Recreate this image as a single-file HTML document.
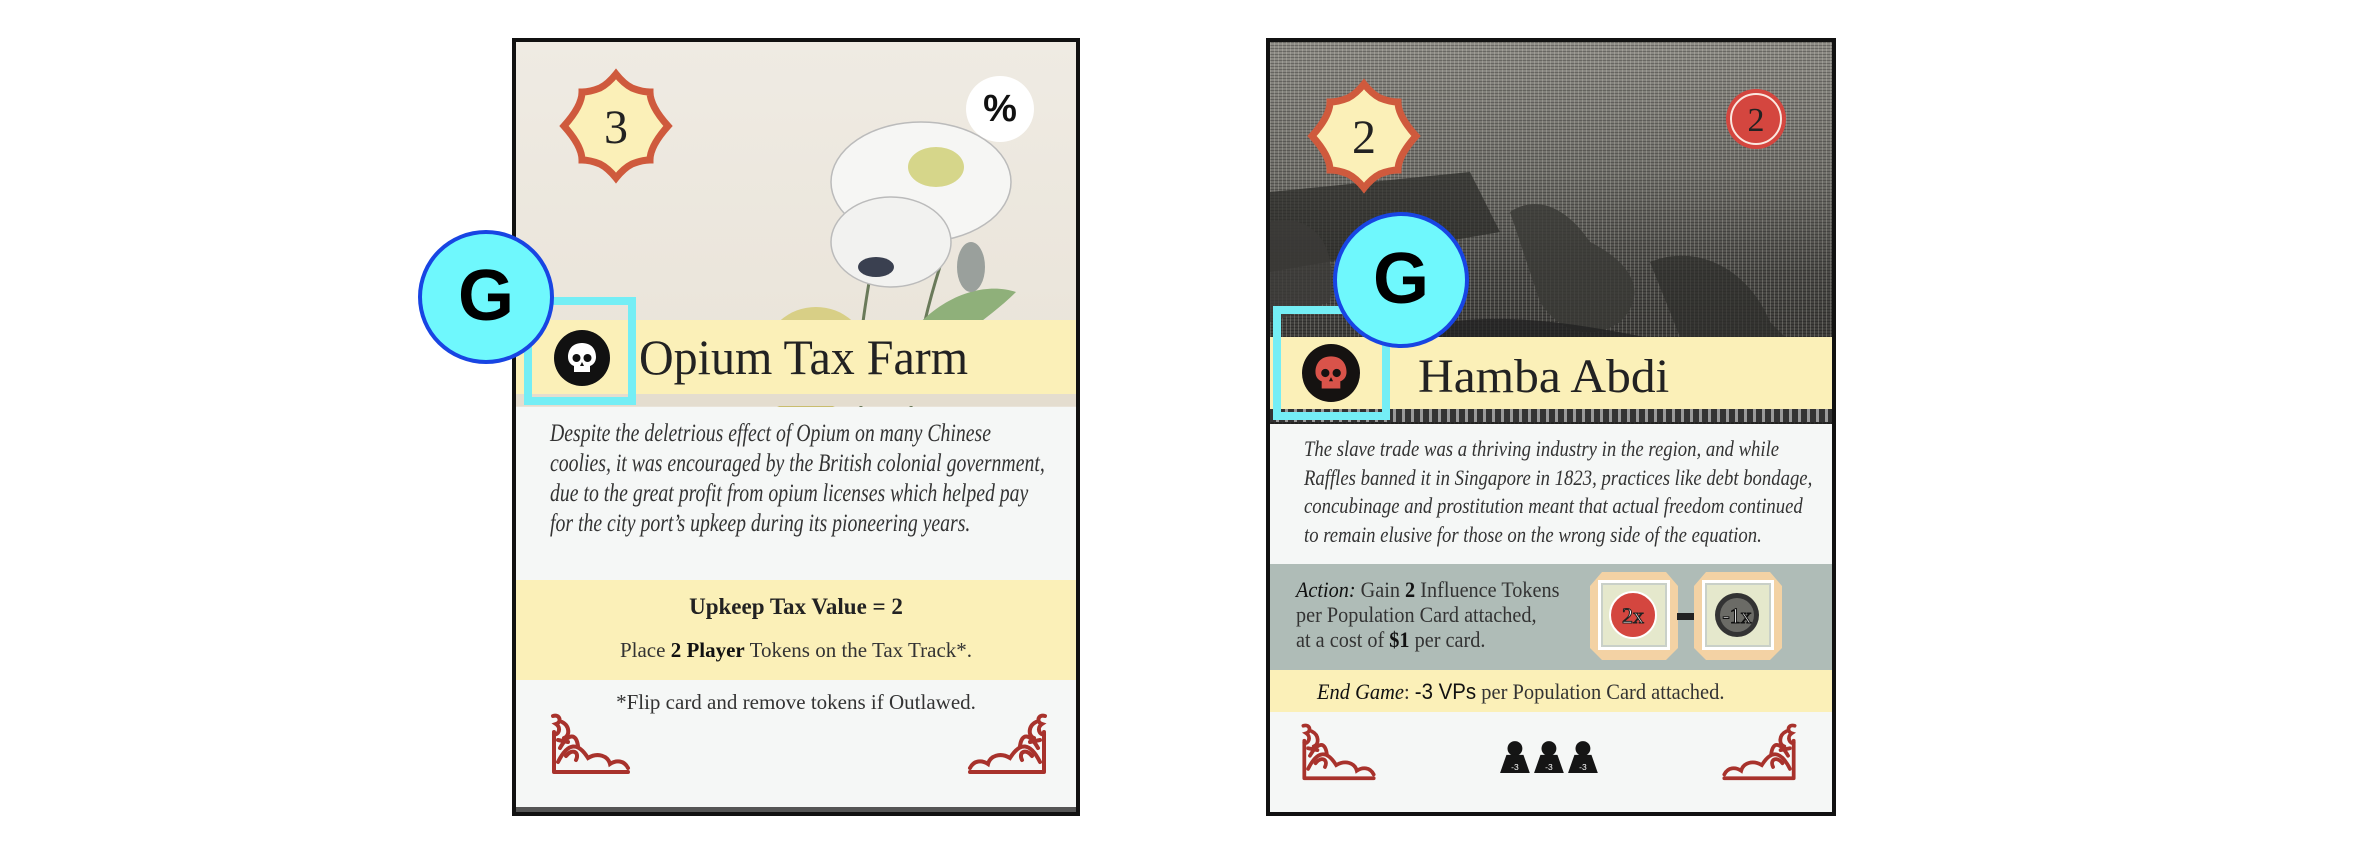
<!DOCTYPE html>
<html><head><meta charset="utf-8">
<style>
*{margin:0;padding:0;box-sizing:border-box}
body{width:2378px;height:844px;background:#fff;position:relative;overflow:hidden;font-family:"Liberation Serif",serif;color:#222}
.abs{position:absolute}
.card{position:absolute;border:4px solid #111;overflow:hidden;background:#f5f7f6}
.band{position:absolute;left:0;right:0;background:#fbf0b8}
.line{position:absolute;white-space:nowrap;transform-origin:0 0}
.g{position:absolute;border-radius:50%;background:#6ff8fd;border:4px solid #1845e3;font-family:"Liberation Sans",sans-serif;font-weight:bold;color:#000;text-align:center}
.sq{position:absolute;border:8px solid #74eef5}
</style></head><body>

<!-- CARD 1 -->
<div class="card" style="left:512px;top:38px;width:568px;height:778px">
  <div class="abs" style="left:0;top:0;width:560px;height:365px;background:linear-gradient(#efebe3,#e9e3d8)"></div>
  <svg class="abs" style="left:0;top:0" width="560" height="365">
    <ellipse cx="300" cy="310" rx="50" ry="45" fill="#d8cf86"/>
    <ellipse cx="290" cy="330" rx="55" ry="40" fill="#c9bd6e"/>
    <path d="M360 200 C350 260 340 300 345 365" stroke="#6a7a5a" stroke-width="3" fill="none"/>
    <path d="M440 180 C420 230 400 300 395 365" stroke="#6a7a5a" stroke-width="3" fill="none"/>
    <path d="M380 310 C420 250 470 240 500 250 C470 280 430 300 400 340Z" fill="#8fb07a"/>
    <ellipse cx="405" cy="140" rx="90" ry="60" fill="#f6f6f4" stroke="#bbb" stroke-width="1.5"/>
    <ellipse cx="375" cy="200" rx="60" ry="45" fill="#f2f2f0" stroke="#bbb" stroke-width="1.5"/>
    <ellipse cx="420" cy="125" rx="28" ry="20" fill="#d6d68a"/>
    <ellipse cx="360" cy="225" rx="18" ry="10" fill="#3a4050"/>
    <ellipse cx="455" cy="225" rx="14" ry="25" fill="#9aa09c"/>
  </svg>
  <svg class="abs" style="left:42px;top:26px" width="116" height="116" viewBox="-58 -58 116 116">
    <path d="M0 -52 Q8 -42 16 -38 Q26 -34 34 -34 Q34 -20 52 0 Q34 20 34 34 Q26 34 16 38 Q8 42 0 52 Q-8 42 -16 38 Q-26 34 -34 34 Q-34 20 -52 0 Q-34 -20 -34 -34 Q-26 -34 -16 -38 Q-8 -42 0 -52Z" fill="#fbf0b8" stroke="#cf5a3d" stroke-width="7"/>
    <text x="0" y="17" text-anchor="middle" font-family="Liberation Serif" font-size="48" fill="#222">3</text>
  </svg>
  <div class="abs" style="left:450px;top:34px;width:68px;height:66px;border-radius:50%;background:#fff;text-align:center;font:bold 38px/66px 'Liberation Sans',sans-serif;color:#111">%</div>
  <div class="band" style="top:278px;height:74px"></div>
  <div class="abs" style="left:0;top:352px;width:560px;height:12px;background:#e4ddcf"></div>
  <svg class="abs" style="left:38px;top:288px" width="56" height="56" viewBox="0 0 56 56">
    <circle cx="28" cy="28" r="28" fill="#111"/>
    <path d="M28 13 C18 13 14 20 14 27 C14 32 17 35 20 36 L20 42 L36 42 L36 36 C39 35 42 32 42 27 C42 20 38 13 28 13Z" fill="#fff"/>
    <circle cx="22.5" cy="28" r="4" fill="#111"/><circle cx="33.5" cy="28" r="4" fill="#111"/>
    <path d="M28 32 L26 36 L30 36Z" fill="#111"/>
  </svg>
  <div class="line" style="left:123px;top:286px;font-size:50px;transform:scaleX(0.96)">Opium Tax Farm</div>
  <div class="line" style="left:34px;top:377px;font-size:25px;font-style:italic;line-height:30px;transform:scaleX(0.79);color:#333">Despite the deletrious effect of Opium on many Chinese<br>coolies, it was encouraged by the British colonial government,<br>due to the great profit from opium licenses which helped pay<br>for the city port’s upkeep during its pioneering years.</div>
  <div class="band" style="top:538px;height:100px"></div>
  <div class="abs" style="left:0;width:560px;top:552px;text-align:center;font-weight:bold;font-size:23px;color:#222">Upkeep Tax Value = 2</div>
  <div class="abs" style="left:0;width:560px;top:596px;text-align:center;font-size:21px;color:#333">Place <b style="color:#111">2 Player</b> Tokens on the Tax Track*.</div>
  <div class="abs" style="left:0;width:560px;top:648px;text-align:center;font-size:21px;color:#333">*Flip card and remove tokens if Outlawed.</div>
  <svg class="abs" style="left:32px;top:670px" width="86" height="64" viewBox="0 0 86 64"><g fill="none" stroke="#a8322c" stroke-width="4" stroke-linecap="round">
    <path d="M5 4 C12 2 14 10 8 12 C14 16 10 24 6 22"/><path d="M6 60 L6 20 M6 60 L80 60"/>
    <path d="M10 50 C20 30 30 30 40 46 C50 40 60 44 62 52 C68 48 76 48 80 56"/>
    <path d="M12 36 C20 22 28 20 30 34 M18 44 C24 36 32 40 28 48"/><path d="M10 28 L20 30 M14 10 C22 14 22 24 16 26"/>
  </g></svg>
  <svg class="abs" style="left:448px;top:670px;transform:scaleX(-1)" width="86" height="64" viewBox="0 0 86 64"><g fill="none" stroke="#a8322c" stroke-width="4" stroke-linecap="round">
    <path d="M5 4 C12 2 14 10 8 12 C14 16 10 24 6 22"/><path d="M6 60 L6 20 M6 60 L80 60"/>
    <path d="M10 50 C20 30 30 30 40 46 C50 40 60 44 62 52 C68 48 76 48 80 56"/>
    <path d="M12 36 C20 22 28 20 30 34 M18 44 C24 36 32 40 28 48"/><path d="M10 28 L20 30 M14 10 C22 14 22 24 16 26"/>
  </g></svg>
  <div class="abs" style="left:0;top:765px;width:560px;height:5px;background:#555"></div>
</div>
<div class="sq" style="left:524px;top:297px;width:112px;height:108px"></div>
<div class="g" style="left:418px;top:230px;width:136px;height:134px;font-size:72px;line-height:124px">G</div>

<!-- CARD 2 -->
<div class="card" style="left:1266px;top:38px;width:570px;height:778px">
  <div class="abs" style="left:0;top:0;width:562px;height:382px;background:
    repeating-linear-gradient(90deg,rgba(255,255,240,.18) 0 1px,transparent 1px 4px),
    repeating-linear-gradient(0deg,rgba(0,0,0,.25) 0 1px,transparent 1px 3px),
    linear-gradient(#8e8c86 0%,#6f6e69 35%,#4a4946 60%,#2d2c2a 100%)"></div>
  <svg class="abs" style="left:0;top:0" width="562" height="382">
    <path d="M0 150 L200 130 L230 190 L0 230Z" fill="#2a2927" opacity=".7"/>
    <path d="M240 170 C270 150 300 170 320 200 C360 220 380 250 350 280 C320 300 290 290 270 260Z" fill="#3a3936" opacity=".8"/>
    <path d="M380 220 C430 200 480 230 500 280 L540 320 L420 320Z" fill="#2e2d2b" opacity=".7"/>
    <path d="M100 300 C200 260 300 280 400 300 L562 330 L562 382 L0 382 L0 320Z" fill="#222" opacity=".75"/>
    <path d="M0 180 C40 170 70 200 60 260 L0 280Z" fill="#3c3b38" opacity=".8"/>
  </svg>
  <svg class="abs" style="left:36px;top:36px" width="116" height="116" viewBox="-58 -58 116 116">
    <path d="M0 -52 Q8 -42 16 -38 Q26 -34 34 -34 Q34 -20 52 0 Q34 20 34 34 Q26 34 16 38 Q8 42 0 52 Q-8 42 -16 38 Q-26 34 -34 34 Q-34 20 -52 0 Q-34 -20 -34 -34 Q-26 -34 -16 -38 Q-8 -42 0 -52Z" fill="#fbf0b8" stroke="#cf5a3d" stroke-width="7"/>
    <text x="0" y="17" text-anchor="middle" font-family="Liberation Serif" font-size="48" fill="#222">2</text>
  </svg>
  <svg class="abs" style="left:454px;top:45px" width="64" height="64" viewBox="0 0 64 64">
    <circle cx="32" cy="32" r="30" fill="#d4463f"/><circle cx="32" cy="32" r="25" fill="none" stroke="#fbe8e0" stroke-width="2"/>
    <text x="32" y="44" text-anchor="middle" font-family="Liberation Serif" font-size="34" fill="#222">2</text>
  </svg>
  <div class="band" style="top:295px;height:72px"></div>
  <div class="abs" style="left:0;top:367px;width:562px;height:13px;background:repeating-linear-gradient(90deg,#333 0 6px,#999 6px 9px)"></div>
  <svg class="abs" style="left:32px;top:302px" width="58" height="58" viewBox="0 0 56 56">
    <circle cx="28" cy="28" r="28" fill="#151211"/>
    <path d="M28 12 C18 12 13 19 13 27 C13 32 16 35 19 36 L19 43 L37 43 L37 36 C40 35 43 32 43 27 C43 19 38 12 28 12Z" fill="#d9534a"/>
    <circle cx="22.5" cy="28" r="4" fill="#151211"/><circle cx="33.5" cy="28" r="4" fill="#151211"/>
    <path d="M28 32 L26 36 L30 36Z" fill="#151211"/>
  </svg>
  <div class="line" style="left:148px;top:307px;font-size:48px;transform:scaleX(1.03)">Hamba Abdi</div>
  <div class="line" style="left:34px;top:393px;font-size:22px;font-style:italic;line-height:28.5px;transform:scaleX(0.85);color:#333">The slave trade was a thriving industry in the region, and while<br>Raffles banned it in Singapore in 1823, practices like debt bondage,<br>concubinage and prostitution meant that actual freedom continued<br>to remain elusive for those on the wrong side of the equation.</div>
  <div class="abs" style="left:0;top:522px;width:562px;height:106px;background:#afbcb7"></div>
  <div class="line" style="left:26px;top:535px;font-size:22px;line-height:25px;color:#333;transform:scaleX(0.92)"><i style="color:#111">Action:</i> Gain <b style="color:#111">2</b> Influence Tokens<br>per Population Card attached,<br>at a cost of <b style="color:#111">$1</b> per card.</div>
  <svg class="abs" style="left:320px;top:530px" width="200" height="92" viewBox="0 0 200 92">
    <g><polygon points="12,0 76,0 88,14 88,76 76,88 12,88 0,76 0,14" fill="#f3d2a4"/>
    <rect x="8" y="8" width="72" height="70" fill="#fff"/><rect x="12" y="12" width="64" height="62" fill="#e5e8cc" stroke="#c9d0c8" stroke-width="2"/>
    <circle cx="43" cy="43" r="23" fill="#d4463f" stroke="#fff" stroke-width="2"/>
    <text x="43" y="51" text-anchor="middle" font-family="Liberation Serif" font-size="22" fill="#fff" stroke="#222" stroke-width="1">2x</text></g>
    <rect x="87" y="41" width="18" height="7" fill="#222"/>
    <g transform="translate(104,0)"><polygon points="12,0 76,0 88,14 88,76 76,88 12,88 0,76 0,14" fill="#f3d2a4"/>
    <rect x="8" y="8" width="72" height="70" fill="#fff"/><rect x="12" y="12" width="64" height="62" fill="#e5e8cc" stroke="#c9d0c8" stroke-width="2"/>
    <circle cx="43" cy="43" r="22" fill="#333"/><circle cx="43" cy="43" r="17" fill="#6b6b66"/>
    <text x="43" y="51" text-anchor="middle" font-family="Liberation Serif" font-size="22" fill="#fff" stroke="#111" stroke-width="1">-1x</text></g>
  </svg>
  <div class="band" style="top:628px;height:42px"></div>
  <div class="line" style="left:47px;top:637px;font-size:22px;color:#333;transform:scaleX(0.93)"><i style="color:#111">End Game</i>: <b style="color:#111;font-family:'Liberation Sans',sans-serif;font-weight:normal">-3 VPs</b> per Population Card attached.</div>
  <svg class="abs" style="left:26px;top:680px" width="86" height="60" viewBox="0 0 86 64"><g fill="none" stroke="#a8322c" stroke-width="4" stroke-linecap="round">
    <path d="M5 4 C12 2 14 10 8 12 C14 16 10 24 6 22"/><path d="M6 60 L6 20 M6 60 L80 60"/>
    <path d="M10 50 C20 30 30 30 40 46 C50 40 60 44 62 52 C68 48 76 48 80 56"/>
    <path d="M12 36 C20 22 28 20 30 34 M18 44 C24 36 32 40 28 48"/><path d="M10 28 L20 30 M14 10 C22 14 22 24 16 26"/>
  </g></svg>
  <svg class="abs" style="left:446px;top:680px;transform:scaleX(-1)" width="86" height="60" viewBox="0 0 86 64"><g fill="none" stroke="#a8322c" stroke-width="4" stroke-linecap="round">
    <path d="M5 4 C12 2 14 10 8 12 C14 16 10 24 6 22"/><path d="M6 60 L6 20 M6 60 L80 60"/>
    <path d="M10 50 C20 30 30 30 40 46 C50 40 60 44 62 52 C68 48 76 48 80 56"/>
    <path d="M12 36 C20 22 28 20 30 34 M18 44 C24 36 32 40 28 48"/><path d="M10 28 L20 30 M14 10 C22 14 22 24 16 26"/>
  </g></svg>
  <svg class="abs" style="left:230px;top:698px" width="100" height="34" viewBox="0 0 94 32">
    <g fill="#151515"><circle cx="14" cy="8" r="7"/><path d="M6 14 L22 14 L28 31 L0 31Z"/>
    <circle cx="46" cy="8" r="7"/><path d="M38 14 L54 14 L60 31 L32 31Z"/>
    <circle cx="78" cy="8" r="7"/><path d="M70 14 L86 14 L92 31 L64 31Z"/></g>
    <g fill="#fff" font-family="Liberation Sans" font-size="8" text-anchor="middle"><text x="14" y="28">-3</text><text x="46" y="28">-3</text><text x="78" y="28">-3</text></g>
  </svg>
</div>
<div class="sq" style="left:1273px;top:306px;width:117px;height:114px"></div>
<div class="g" style="left:1333px;top:212px;width:136px;height:136px;font-size:72px;line-height:126px">G</div>

</body></html>
